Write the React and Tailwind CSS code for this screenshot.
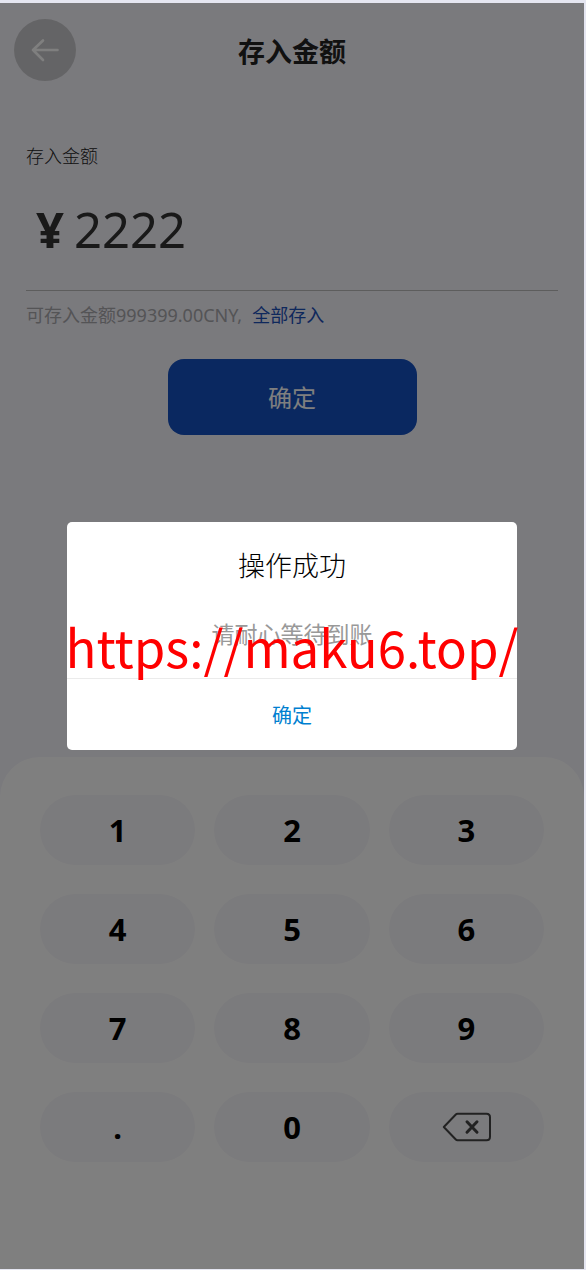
import { useState } from "react";

const KEYS = ["1", "2", "3", "4", "5", "6", "7", "8", "9", ".", "0"];
const KEY_CLASS =
  "flex h-[70px] items-center justify-center rounded-full bg-[#f7f6fa] text-[31px] font-bold text-black";

function BackIcon() {
  return (
    <svg width="30" height="24" viewBox="0 0 30 24" fill="none" stroke="currentColor" strokeWidth="2.6" strokeLinecap="round" strokeLinejoin="round" aria-hidden="true">
      <path d="M27.500 12H3M13 2.500L3 12l10 10" />
    </svg>
  );
}

function DeleteIcon() {
  return (
    <svg width="50" height="30" viewBox="0 0 50 30" fill="none" stroke="#444" strokeLinejoin="round" aria-hidden="true">
      <path d="M16.500 1.800H45.500Q49 1.800 49 5.300V24.700Q49 28.200 45.500 28.200H16.500Q15.500 28.200 14.800 27.500L2.800 15L14.800 2.500Q15.500 1.800 16.500 1.800Z" strokeWidth="2" />
      <path d="M26 9.800L36 20.200M36 9.800L26 20.200" strokeWidth="3" strokeLinecap="round" />
    </svg>
  );
}

export default function App() {
  const [amount, setAmount] = useState("2222");
  const [open, setOpen] = useState(true);

  return (
    <div className="flex min-h-screen flex-col bg-[#e5e6f1] pt-[3px] pr-0.5 pb-px font-['Noto_Sans','Noto_Sans_CJK_SC',sans-serif]">
      <div className="relative flex flex-1 flex-col bg-[#f5f4fb]">
        <header className="grid grid-cols-[62px_1fr_62px] items-center px-3.5 pt-4">
          <button type="button" aria-label="返回" className="flex size-[62px] items-center justify-center rounded-full bg-[#c9c9cc] text-white">
            <BackIcon />
          </button>
          <h1 className="pt-1 text-center text-[27px] leading-9 font-bold text-[#222]">存入金额</h1>
        </header>

        <main className="flex flex-1 flex-col px-[26px] pt-[61px]">
          <label htmlFor="amount" className="text-lg leading-7 font-light text-[#222]">
            存入金额
          </label>
          <div className="flex h-[121px] items-center border-b border-[#bbb] pl-2.5 text-[49px] text-[#333]">
            <span className="font-bold">¥</span>
            <input
              id="amount"
              inputMode="decimal"
              value={amount}
              onChange={(e) => setAmount(e.target.value)}
              className="ml-2.5 min-w-0 flex-1 bg-transparent outline-none"
            />
          </div>
          <p className="mt-2.5 flex gap-2.5 text-lg leading-7 text-[#a8a8ac]">
            <span>可存入金额999399.00CNY,</span>
            <button type="button" className="text-[#1c50b8]" onClick={() => setAmount("999399.00")}>
              全部存入
            </button>
          </p>
          <button type="button" className="mt-[30px] h-[76px] w-[249px] self-center rounded-2xl bg-[#1450c0] pt-0.5 text-2xl text-white">
            确定
          </button>
        </main>

        <section aria-label="数字键盘" className="grid grid-cols-3 gap-x-[19px] gap-y-[29px] rounded-t-[40px] bg-white px-10 pt-[38px] pb-[107px]">
          {KEYS.map((key) => (
            <button key={key} type="button" className={KEY_CLASS} onClick={() => setAmount(amount + key)}>
              {key}
            </button>
          ))}
          <button type="button" aria-label="删除" className={KEY_CLASS} onClick={() => setAmount(amount.slice(0, -1))}>
            <DeleteIcon />
          </button>
        </section>

        {open && (
          <div className="absolute inset-0 flex items-center justify-center bg-black/50">
            <div role="dialog" aria-modal="true" aria-labelledby="dialog-title" className="w-[77%] rounded-[5px] bg-white text-center">
              <h2 id="dialog-title" className="pt-6 text-[27px] leading-10 font-light text-black">
                操作成功
              </h2>
              <div className="relative px-5 pt-8 pb-7 text-[23px] leading-8">
                <p className="text-[#999]">请耐心等待到账</p>
                <p className="absolute inset-x-0 top-1/2 flex -translate-y-1/2 justify-center pt-7 text-[51px] leading-none whitespace-nowrap text-[#f00] font-['Noto_Sans_CJK_SC',sans-serif]">
                  https://maku6.top/
                </p>
              </div>
              <button type="button" className="h-[72px] w-full border-t border-[#ebebeb] pt-0.5 text-xl text-[#007fd0]" onClick={() => setOpen(false)}>
                确定
              </button>
            </div>
          </div>
        )}
      </div>
    </div>
  );
}
